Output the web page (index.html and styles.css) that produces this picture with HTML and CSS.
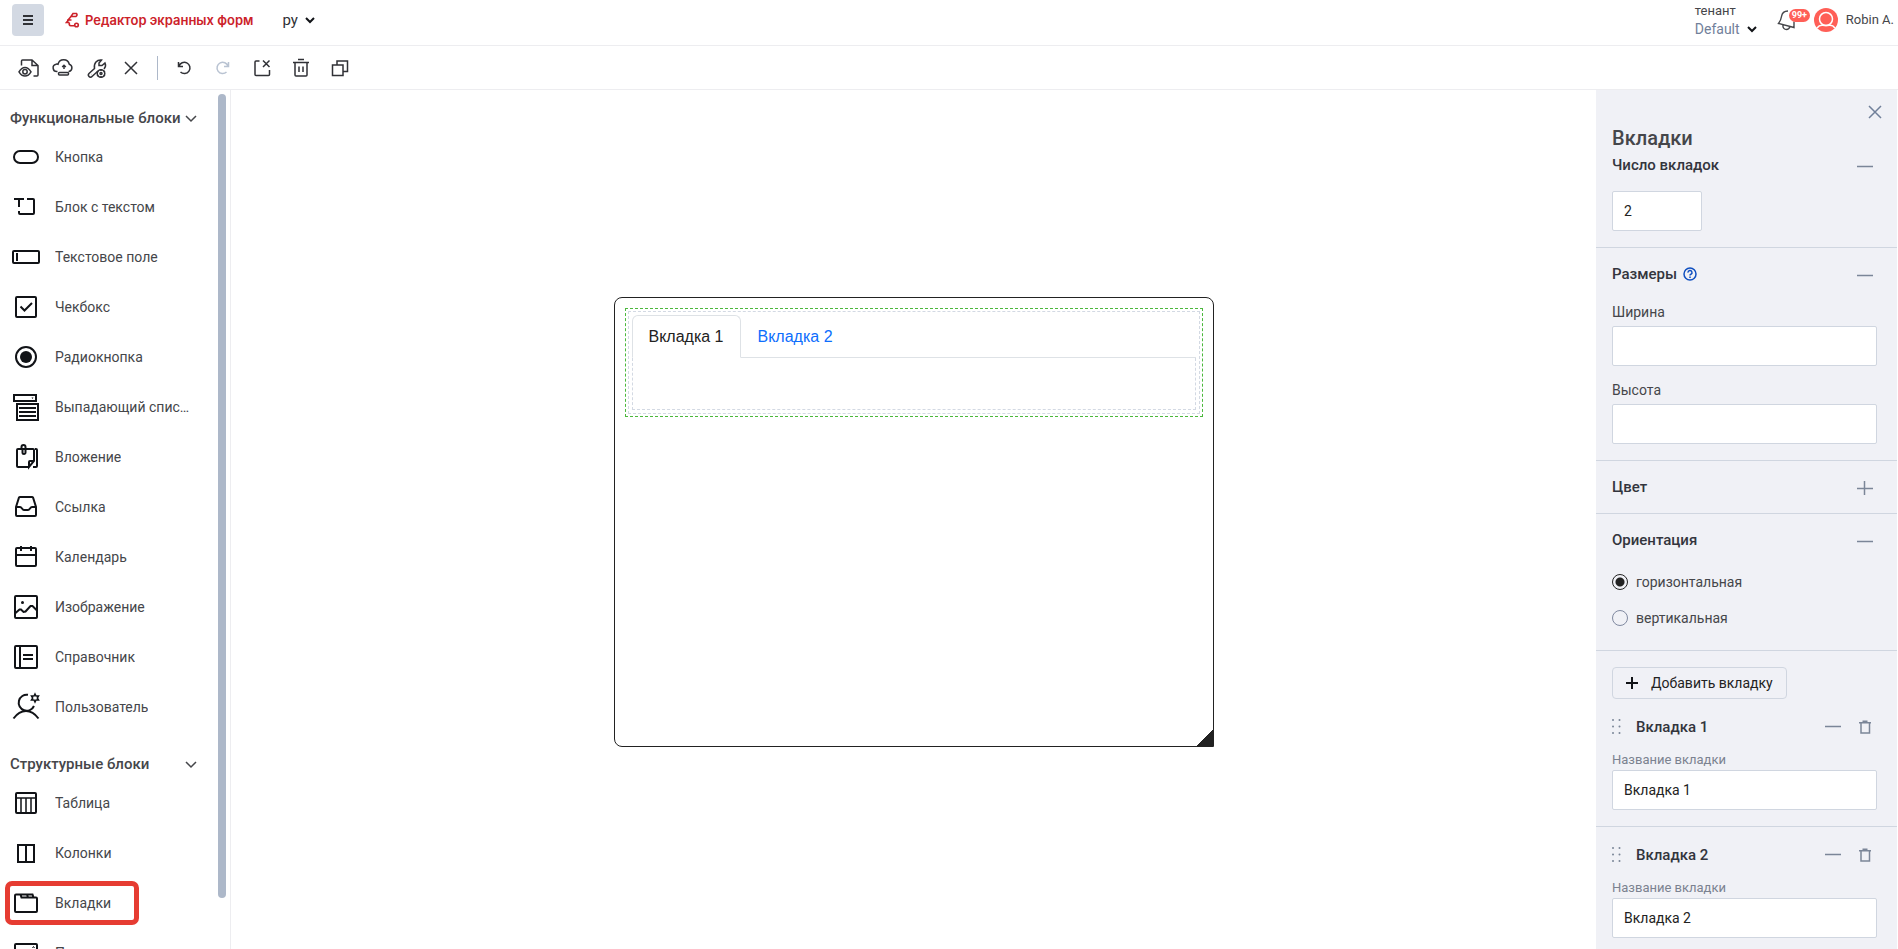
FILE: index.html
```html
<!DOCTYPE html>
<html lang="ru">
<head>
  <meta charset="UTF-8" />
  <meta name="viewport" content="width=device-width, initial-scale=1.0"/>
  <title>Редактор экранных форм</title>
  <link rel="stylesheet" href="styles.css">
</head>
<body>
  <header class="header">
    <button class="menu-btn" aria-label="Меню">
      <svg width="12" height="12" viewBox="0 0 12 12"><path d="M1 2h10M1 6h10M1 10h10" stroke-width="2"/></svg>
    </button>
    <a class="brand" href="#">
      <svg width="16" height="16" viewBox="0 0 16 16"><path d="M6 4.500L8 1.500h3.500q1.200 1.500-.5 3H6zM6 4.500L3.500 7.500M2 8h4.500M3.500 8L1.500 10.500h3M4.500 10.500q-1 3 1.500 3.200h3" stroke-width="1.600"/><circle cx="11.500" cy="13" r="1.800" stroke-width="1.600"/></svg>
      <span>Редактор экранных форм</span>
    </a>
    <div class="picker">
      <select class="lang" aria-label="Язык"><option>ру</option></select>
      <svg width="10" height="8" viewBox="0 0 10 8"><path d="M1 2l4 4 4-4" stroke-width="2"/></svg>
    </div>
    <div class="account">
      <div class="tenant">
        <label for="tenant">тенант</label>
        <div class="picker">
          <select id="tenant" class="tenant-select"><option>Default</option></select>
          <svg width="10" height="8" viewBox="0 0 10 8"><path d="M1 2l4 4 4-4" stroke-width="2"/></svg>
        </div>
      </div>
      <button class="bell" aria-label="Уведомления">
        <svg width="20" height="22" viewBox="0 0 20 22"><path d="M11 2C7 2 5 4 4.500 7.500 4 11 3.500 12 1.500 14.500L17 18.500v-6M6 16c-.5 3 1.500 4.500 3.500 4.500S12.500 19 13 17.500" stroke-width="1.400"/></svg>
        <span class="badge">99+</span>
      </button>
      <div class="user">
        <svg width="24" height="24" viewBox="0 0 24 24"><circle cx="12" cy="12" r="12" fill="#ff5f57" stroke="none"/><g stroke="#fff" stroke-width="1.500"><circle cx="12" cy="11" r="6.500"/><path d="M3 20q2-2.800 5-2.800h1q3 .8 6 0h1q3 0 5 2.800"/></g></svg>
        <span>Robin A.</span>
      </div>
    </div>
  </header>

  <div class="toolbar">
    <div class="tools">
      <button aria-label="Просмотр"><svg width="24" height="24" viewBox="0 0 24 24"><path d="M4.500 9.500V5a1 1 0 0 1 1-1h9.500l6 5.500V19a1 1 0 0 1-1 1h-3.500M15 4v5.500h6"/><path d="M2 15.800q2.500-4.300 6-4.300t6 4.300q-2.500 4.200-6 4.200t-6-4.200z"/><circle cx="8" cy="15.800" r="2.200"/></svg></button>
      <button aria-label="Сохранить"><svg width="24" height="24" viewBox="0 0 24 24"><path d="M6.500 15.500H6A3.700 3.700 0 0 1 5 8.200q1-.3 2 .1A5.800 5.800 0 0 1 18.300 8.200a3.800 3.800 0 0 1-.3 7.300h-.5M13 13V9.500M11.200 11L13 9.200l1.800 1.800"/><rect x="7.500" y="16.500" width="10" height="2.500" rx="1"/></svg></button>
      <button aria-label="Настройки"><svg width="24" height="24" viewBox="0 0 24 24"><path d="M12.500 15.500l-5.500 5a2 2 0 0 1-3 0 2.200 2.200 0 0 1 0-3l5.500-5C8.500 7 12 3.500 16.500 4L14 7v2.500h3L20 7q1.500 3-1 6M6 18.500h.2"/><circle cx="16" cy="17.500" r="3.800"/><circle cx="16" cy="17.500" r="1"/><path d="M16 13v2M16 20v2M12 15l1.500 1M18.500 19l1.500 1M12 20l1.500-1M18.500 16l1.500-1"/></svg></button>
      <button aria-label="Закрыть"><svg width="24" height="24" viewBox="0 0 24 24"><path d="M6 6l12 12M18 6L6 18"/></svg></button>
    </div>
    <div class="separator"></div>
    <div class="tools tools-wide">
      <button aria-label="Отменить"><svg width="24" height="24" viewBox="0 0 24 24"><path d="M6.500 6v4.500H11M7 10.300a5.600 5.600 0 1 1 1.500 5.700"/></svg></button>
      <button aria-label="Повторить" disabled><svg width="24" height="24" viewBox="0 0 24 24"><path d="M17.500 6v4.500H13M17 10.300a5.600 5.600 0 1 0-1.500 5.700"/></svg></button>
      <button aria-label="Очистить"><svg width="24" height="24" viewBox="0 0 24 24"><path d="M9.500 5H6a1 1 0 0 0-1 1v12.500a1 1 0 0 0 1 1h12.500a1 1 0 0 0 1-1V14M13 4.500l6.500 6.500M19.500 4.500L13 11"/></svg></button>
      <button aria-label="Удалить"><svg width="24" height="24" viewBox="0 0 24 24"><path d="M4 6.500h16M9 3.500h6M6 6.500V19a1 1 0 0 0 1 1h10a1 1 0 0 0 1-1V6.500M10 10.500v5.500M14 10.500v5.500"/></svg></button>
      <button aria-label="Копировать"><svg width="24" height="24" viewBox="0 0 24 24"><path d="M9 9V5h10.500v10.500H15"/><rect x="4.500" y="9" width="10.500" height="10.500"/></svg></button>
    </div>
  </div>

  <div class="workspace">
    <aside class="sidebar">
      <div class="block-list">
        <section class="group">
          <button class="group-title">Функциональные блоки
            <svg width="12" height="12" viewBox="0 0 12 12"><path d="M1 4l5 5 5-5"/></svg>
          </button>
          <button class="block"><svg width="32" height="32" viewBox="0 0 32 32"><rect x="4" y="10" width="24" height="12" rx="6"/></svg><span>Кнопка</span></button>
          <button class="block"><svg width="32" height="32" viewBox="0 0 32 32"><path d="M4 8h10M9 8v8M17 8h6a1 1 0 0 1 1 1v13a1 1 0 0 1-1 1H10a1 1 0 0 1-1-1v-2"/></svg><span>Блок с текстом</span></button>
          <button class="block"><svg width="32" height="32" viewBox="0 0 32 32"><rect x="3" y="10" width="26" height="12" rx="1"/><path d="M7 12v8"/></svg><span>Текстовое поле</span></button>
          <button class="block"><svg width="32" height="32" viewBox="0 0 32 32"><rect x="6" y="6" width="20" height="20" rx="1"/><path d="M10.500 15.500l4 4 7.500-7.500"/></svg><span>Чекбокс</span></button>
          <button class="block"><svg width="32" height="32" viewBox="0 0 32 32"><circle cx="16" cy="16" r="10"/><circle cx="16" cy="16" r="6" fill="#111317" stroke="none"/></svg><span>Радиокнопка</span></button>
          <button class="block"><svg width="32" height="32" viewBox="0 0 32 32"><path d="M4 4h22v6H4zM7 13h21v16H7zM9 17h17M9 21h17M9 25h17"/><path d="M21.500 6.500h2l-1 1.500z" fill="#111317" stroke="none"/></svg><span>Выпадающий список</span></button>
          <button class="block"><svg width="32" height="32" viewBox="0 0 32 32"><path d="M18 26H8a1 1 0 0 1-1-1V9a1 1 0 0 1 1-1h15a1 1 0 0 1 1 1v11l-5 6v-5a1 1 0 0 1 1-1h4M25 8h1a1 1 0 0 1 1 1v16a1 1 0 0 1-1 1h-3"/><path d="M11.500 8.500V6a2 2 0 0 1 4 0v5.500a1.500 1.500 0 0 1-3 0V8"/></svg><span>Вложение</span></button>
          <button class="block"><svg width="32" height="32" viewBox="0 0 32 32"><path d="M6 16l3-9.500q.3-.5 1-.5h12q.7 0 1 .5l3 9.500v8a1 1 0 0 1-1 1H7a1 1 0 0 1-1-1zM6 16h4q1 0 2 1.500t2 1.500h4q1 0 2-1.500t2-1.500h4"/></svg><span>Ссылка</span></button>
          <button class="block"><svg width="32" height="32" viewBox="0 0 32 32"><rect x="6" y="7" width="20" height="18" rx="1"/><path d="M6 14h20M11 5v5M21 5v5"/></svg><span>Календарь</span></button>
          <button class="block"><svg width="32" height="32" viewBox="0 0 32 32"><rect x="5" y="5" width="22" height="22" rx="1"/><path d="M5.500 22l4-3.500h1.500l2.500 2.500 2-.5 5-5.500h2l4.500 4.500"/><circle cx="12.500" cy="11.500" r="1.500" fill="#111317" stroke="none"/></svg><span>Изображение</span></button>
          <button class="block"><svg width="32" height="32" viewBox="0 0 32 32"><rect x="5" y="5" width="22" height="22" rx="1"/><path d="M10 5v22M13 14h10M13 18h10"/></svg><span>Справочник</span></button>
          <button class="block"><svg width="32" height="32" viewBox="0 0 32 32"><path d="M18 3.800A8 8 0 1 0 24 15M3.500 27.500Q9 20 16 20t12.500 7.500"/><path d="M25 3l1 2h2.500l-1.200 2 1.200 2H26l-1 2-1-2h-2.500l1.200-2-1.200-2H24z" stroke-width="1.500"/></svg><span>Пользователь</span></button>
        </section>
        <section class="group">
          <button class="group-title">Структурные блоки
            <svg width="12" height="12" viewBox="0 0 12 12"><path d="M1 4l5 5 5-5"/></svg>
          </button>
          <button class="block"><svg width="32" height="32" viewBox="0 0 32 32"><rect x="6" y="6" width="20" height="20" rx="1"/><path d="M6 11h20M11 11v15M16 11v15M21 11v15" stroke-width="1.500"/></svg><span>Таблица</span></button>
          <button class="block"><svg width="32" height="32" viewBox="0 0 32 32"><path d="M8 8h16v17H8zM16 8v17"/></svg><span>Колонки</span></button>
          <button class="block"><svg width="32" height="32" viewBox="0 0 32 32"><path d="M24 10.500h2a1 1 0 0 1 1 1V24a1 1 0 0 1-1 1H6a1 1 0 0 1-1-1V8.500a1 1 0 0 1 1-1h16.500l1 3h-12l-1-3M17 7.500l1 3"/></svg><span>Вкладки</span><i class="marker"></i></button>
          <button class="block"><svg width="32" height="32" viewBox="0 0 32 32"><rect x="5" y="7" width="22" height="19" rx="1"/><path d="M22.500 11l1-1.500 1 1.500" stroke-width="1"/></svg><span>Панель</span></button>
        </section>
      </div>
      <div class="scroll-track"><div class="scroll-thumb"></div></div>
    </aside>

    <main class="canvas">
      <div class="form-frame">
        <div class="selected">
          <div class="tabs-block">
            <div class="tabs">
              <a class="tab active" href="#tab1">Вкладка 1</a>
              <a class="tab" href="#tab2">Вкладка 2</a>
            </div>
            <div class="tab-content"></div>
          </div>
        </div>
        <div class="resize-handle"></div>
      </div>
    </main>

    <aside class="panel">
      <div class="panel-top">
        <button aria-label="Закрыть панель"><svg width="14" height="14" viewBox="0 0 14 14"><path d="M1 1l12 12M13 1L1 13"/></svg></button>
      </div>
      <h1>Вкладки</h1>

      <section class="prop first">
        <div class="prop-head">
          <label for="count">Число вкладок</label>
          <button aria-label="Свернуть"><svg width="16" height="16" viewBox="0 0 16 16"><path d="M0 9.500h16"/></svg></button>
        </div>
        <input id="count" class="count" type="text" value="2" />
      </section>

      <section class="prop">
        <div class="prop-head">
          <h2>Размеры</h2>
          <svg class="help" width="14" height="14" viewBox="0 0 14 14"><circle cx="7" cy="7" r="6"/><path d="M5 5.600a2 2 0 1 1 2.900 1.700q-.9.400-.9 1.200M7 9.500v1.400"/></svg>
          <button aria-label="Свернуть"><svg width="16" height="16" viewBox="0 0 16 16"><path d="M0 9.500h16"/></svg></button>
        </div>
        <label class="field-label" for="width">Ширина</label>
        <input id="width" type="text" />
        <label class="field-label" for="height">Высота</label>
        <input id="height" type="text" />
      </section>

      <section class="prop collapsed">
        <div class="prop-head">
          <h2>Цвет</h2>
          <button aria-label="Развернуть"><svg width="16" height="16" viewBox="0 0 16 16"><path d="M0 9.500h16M7.500 2v14"/></svg></button>
        </div>
      </section>

      <section class="prop">
        <div class="prop-head">
          <h2>Ориентация</h2>
          <button aria-label="Свернуть"><svg width="16" height="16" viewBox="0 0 16 16"><path d="M0 9.500h16"/></svg></button>
        </div>
        <div class="radios">
          <label><input type="radio" name="orientation" checked />горизонтальная</label>
          <label><input type="radio" name="orientation" />вертикальная</label>
        </div>
      </section>

      <section class="prop tab-prop">
        <button class="add-btn"><svg width="12" height="12" viewBox="0 0 12 12"><path d="M6 0v12M0 6h12"/></svg>Добавить вкладку</button>
        <div class="prop-head">
          <svg class="grip" width="10" height="16" viewBox="0 0 10 16"><path d="M1 1h.01M7.500 1h.01M1 7.500h.01M7.500 7.500h.01M1 14h.01M7.500 14h.01"/></svg>
          <h2>Вкладка 1</h2>
          <button aria-label="Свернуть"><svg width="16" height="16" viewBox="0 0 16 16"><path d="M0 7.500h16"/></svg></button>
          <button aria-label="Удалить вкладку"><svg width="16" height="16" viewBox="0 0 16 16"><path d="M2 3.800h12M5.500 2.300h5M4 4v10h8.500V4"/></svg></button>
        </div>
        <label class="tab-label" for="name1">Название вкладки</label>
        <input id="name1" type="text" value="Вкладка 1" />
      </section>

      <section class="prop tab-prop">
        <div class="prop-head">
          <svg class="grip" width="10" height="16" viewBox="0 0 10 16"><path d="M1 1h.01M7.500 1h.01M1 7.500h.01M7.500 7.500h.01M1 14h.01M7.500 14h.01"/></svg>
          <h2>Вкладка 2</h2>
          <button aria-label="Свернуть"><svg width="16" height="16" viewBox="0 0 16 16"><path d="M0 7.500h16"/></svg></button>
          <button aria-label="Удалить вкладку"><svg width="16" height="16" viewBox="0 0 16 16"><path d="M2 3.800h12M5.500 2.300h5M4 4v10h8.500V4"/></svg></button>
        </div>
        <label class="tab-label" for="name2">Название вкладки</label>
        <input id="name2" type="text" value="Вкладка 2" />
      </section>
    </aside>
  </div>
</body>
</html>
```
FILE: styles.css
```css
* {
  box-sizing: border-box;
}
body {
  margin: 0;
  height: 100vh;
  overflow: hidden;
  display: flex;
  flex-direction: column;
  font-family: Roboto, "Noto Sans", sans-serif;
  font-size: 14px;
  line-height: 20px;
  color: #45464a;
  background: #fff;
}
button {
  display: flex;
  align-items: center;
  padding: 0;
  border: none;
  background: none;
  color: inherit;
  font: inherit;
  cursor: pointer;
}
svg {
  flex: none;
  fill: none;
  stroke: currentColor;
}
h1,
h2 {
  margin: 0;
}

/* header */
.header {
  flex: none;
  display: flex;
  align-items: center;
  height: 46px;
  padding: 0 4px 5px 12px;
  border-bottom: 1px solid #ededf0;
}
.menu-btn {
  justify-content: center;
  width: 32px;
  height: 32px;
  border-radius: 4px;
  background: #d3d9e3;
  color: #303136;
}
.brand {
  display: flex;
  align-items: center;
  gap: 4px;
  margin: 0 29px 0 21px;
  color: #cc2229;
  font-family: Inter, sans-serif;
  font-size: 13px;
  font-weight: 600;
  text-decoration: none;
}
.picker {
  display: flex;
  align-items: center;
  gap: 7px;
  color: #111317;
}
select {
  appearance: none;
  padding: 0;
  border: none;
  background: none;
  color: #303136;
  font: inherit;
}
.lang {
  font-size: 15px;
}
.account {
  display: flex;
  align-items: center;
  margin-left: auto;
}
.tenant {
  line-height: 18px;
}
.tenant label {
  display: block;
  font-size: 13px;
}
.tenant-select {
  color: #71809a;
}
.bell {
  position: relative;
  margin: 0 17px 0 20px;
}
.badge {
  position: absolute;
  left: 12px;
  top: 0;
  padding: 0 3px;
  border-radius: 7px;
  background: #ff5f57;
  color: #fff;
  font-size: 9px;
  font-weight: 700;
  line-height: 13px;
}
.user {
  display: flex;
  align-items: center;
  gap: 8px;
  font-size: 13px;
}

/* toolbar */
.toolbar {
  flex: none;
  display: flex;
  align-items: center;
  height: 44px;
  padding: 0 17px;
  border-bottom: 1px solid #ededf0;
  color: #303136;
}
.tools {
  display: flex;
  gap: 10px;
}
.tools-wide {
  gap: 15px;
}
.tools svg {
  stroke-width: 1.5;
}
.tools button:disabled {
  color: #b9c3d2;
}
.separator {
  width: 1px;
  height: 24px;
  margin: 0 14px;
  background: #adb8c9;
}

.workspace {
  flex: 1;
  display: flex;
  min-height: 0;
}

/* list of blocks */
.sidebar {
  flex: none;
  display: flex;
  width: 231px;
  border-right: 1px solid #ededf0;
}
.block-list {
  flex: 1;
  min-width: 0;
  padding: 14px 22px 0 10px;
  overflow: hidden;
}
.group {
  margin-bottom: 18px;
}
.group-title {
  justify-content: space-between;
  width: 187px;
  height: 28px;
  font-size: 15px;
  font-weight: 500;
}
.group-title svg {
  stroke-width: 1.5;
}
.block {
  position: relative;
  gap: 13px;
  width: 182px;
  height: 50px;
  text-align: left;
}
.block svg {
  color: #111317;
  stroke-width: 2;
}
.block span {
  overflow: hidden;
  text-overflow: ellipsis;
  white-space: nowrap;
}
.marker {
  position: absolute;
  inset: 3px 53px 3px -5px;
  border: 5px solid #e63c32;
  border-radius: 7px;
}
.scroll-track {
  width: 8px;
  margin: 4px 4px 0 0;
}
.scroll-thumb {
  height: 94%;
  border-radius: 4px;
  background: #adb8c9;
}

/* form being edited */
.canvas {
  flex: 1;
  display: flex;
  align-items: center;
  justify-content: center;
  padding-top: 4px;
}
.form-frame {
  position: relative;
  width: 600px;
  height: 450px;
  padding: 10px;
  border: 1px solid #222;
  border-radius: 8px 8px 0 8px;
}
.selected {
  padding: 2px;
  border: 1px dashed #4bb83c;
}
.tabs-block {
  padding: 3px;
  border: 1px dashed #d3d9e3;
  font-family: "Liberation Sans", Arial, sans-serif;
  font-size: 16px;
  line-height: 24px;
}
.tabs {
  display: flex;
  border-bottom: 1px solid #dee2e6;
}
.tab {
  margin-bottom: -1px;
  padding: 9px 16px 8px;
  border: 1px solid transparent;
  border-radius: 6px 6px 0 0;
  color: #0d6efd;
  text-decoration: none;
}
.tab.active {
  border-color: #dee2e6 #dee2e6 #fff;
  background: #fff;
  color: #222;
}
.tab-content {
  height: 52px;
  border: 1px dashed #d3d9e3;
  border-top: none;
}
.resize-handle {
  position: absolute;
  right: 0;
  bottom: 0;
  width: 16px;
  height: 16px;
  background: linear-gradient(135deg, transparent 50%, #222 50%);
}

/* properties */
.panel {
  flex: none;
  width: 301px;
  margin-right: 1px;
  overflow: hidden;
  background: #f0f1f6;
}
.panel svg {
  stroke-width: 1.5;
}
.panel-top {
  display: flex;
  justify-content: flex-end;
  padding: 15px 15px 0;
  color: #71809a;
}
.panel h1 {
  padding: 7px 16px 0;
  font-size: 20px;
  font-weight: 500;
  line-height: 24px;
}
.prop {
  padding: 12px 20px 16px 16px;
  border-bottom: 1px solid #d0d6e0;
}
.prop.first {
  padding-top: 1px;
}
.prop.collapsed {
  padding-bottom: 12px;
}
.prop-head {
  display: flex;
  align-items: center;
  height: 28px;
  padding-right: 4px;
  color: #33353d;
  font-size: 15px;
  font-weight: 500;
}
.prop-head h2 {
  font-size: inherit;
  font-weight: inherit;
}
.prop-head button {
  margin-left: 16px;
  color: #7b8698;
}
.prop-head label,
.prop-head h2:has(+ button) {
  margin-right: auto;
}
.panel .help {
  margin: 0 auto 0 6px;
  color: #0f4fc0;
}
.panel input[type="text"] {
  display: block;
  width: 100%;
  height: 40px;
  padding: 0 11px;
  border: 1px solid #d0d6e0;
  border-radius: 2px;
  background: #fff;
  color: #222;
  font: inherit;
}
.panel input.count {
  width: 90px;
  margin-top: 12px;
}
.field-label {
  display: block;
  padding: 14px 0 4px;
}
.radios {
  padding-top: 10px;
}
.prop:has(.radios) {
  padding-bottom: 14px;
}
.radios label {
  display: flex;
  align-items: center;
  height: 36px;
}
.radios input {
  appearance: none;
  width: 16px;
  height: 16px;
  margin: 0 8px 0 0;
  border: 1px solid #8089a0;
  border-radius: 50%;
}
.radios input:checked {
  border-color: #222;
  background: radial-gradient(#222 4px, transparent 5px);
}
.tab-prop {
  padding-top: 14px;
}
.tab-prop:has(.add-btn) {
  padding-top: 16px;
}
.add-btn {
  gap: 13px;
  height: 32px;
  margin-bottom: 14px;
  padding: 0 13px;
  border: 1px solid #d0d6e0;
  border-radius: 4px;
  color: #222;
}
.panel .add-btn svg {
  color: #111317;
  stroke-width: 2;
}
.panel .grip {
  margin-right: 14px;
  color: #7b8698;
  stroke-width: 2;
  stroke-linecap: round;
}
.tab-label {
  display: block;
  margin-top: 9px;
  color: #7b8290;
  font-size: 13px;
}
```
